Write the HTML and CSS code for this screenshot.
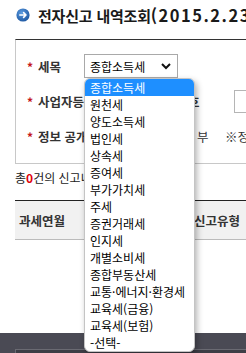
FILE: index.html
```html
<!DOCTYPE html>
<html lang="ko">
<head>
<meta charset="utf-8">
<link rel="stylesheet" href="styles.css">
</head>
<body>
<div class="page">
  <h1 class="title">
    <svg class="ico" width="14" height="14" viewBox="0 0 14 14"><defs><radialGradient id="g" cx="40%" cy="35%" r="70%"><stop offset="0" stop-color="#5b9be0"/><stop offset="1" stop-color="#1c56a0"/></radialGradient></defs><circle cx="7" cy="7" r="6.6" fill="url(#g)"/><path d="M3.8 7H10M7.6 4.6L10 7L7.6 9.4" fill="none" stroke="#fff" stroke-width="1.6" stroke-linecap="round" stroke-linejoin="round"/></svg>
    <span>전자신고 내역조회<span class="date">(2015.2.23 이후)</span></span>
  </h1>
  <div class="search">
    <div class="row">
      <span class="star">*</span><span class="lbl lbl-short">세목</span>
      <div class="select-wrap">
        <div class="select"><span>종합소득세</span><svg width="10" height="7" viewBox="0 0 10 7"><path d="M1 1L5 5L9 1" fill="none" stroke="#111" stroke-width="2"/></svg></div>
        <ul class="menu">
          <li class="on">종합소득세</li>
          <li>원천세</li>
          <li>양도소득세</li>
          <li>법인세</li>
          <li>상속세</li>
          <li>증여세</li>
          <li>부가가치세</li>
          <li>주세</li>
          <li>증권거래세</li>
          <li>인지세</li>
          <li>개별소비세</li>
          <li>종합부동산세</li>
          <li>교통·에너지·환경세</li>
          <li>교육세(금융)</li>
          <li>교육세(보험)</li>
          <li>-선택-</li>
        </ul>
      </div>
    </div>
    <div class="row">
      <span class="star">*</span><span class="lbl lbl-long">사업자등록번호 / 주민등록번호</span>
      <span class="input"></span>
    </div>
    <div class="row">
      <span class="star">*</span><span class="lbl lbl-info">정보 공개여부</span>
      <span class="opt opt-yes">○ 여</span><span class="opt opt-no">부</span><span class="note">※정보공개 동의</span>
    </div>
  </div>
  <p class="count">총<b>0</b>건의 신고내역이 있습니다.</p>
  <div class="grid-head">
    <span class="th th1">과세연월</span>
    <span class="th th2">신고서종류</span>
    <span class="th th3">신고구분신고유형</span>
  </div>
</div>
<div class="footer"><div class="footer-box"></div></div>
</body>
</html>
```
FILE: styles.css
```css
* { box-sizing: border-box; margin: 0; padding: 0; }
html, body { width: 246px; height: 353px; overflow: hidden; }
body {
  font-family: "Noto Sans CJK KR", "Noto Sans", sans-serif;
  color: #333;
  background: #fff;
}
.page { padding-left: 15px; width: 246px; height: 333px; white-space: nowrap; }
.title {
  display: flex;
  align-items: center;
  gap: 8px;
  height: 30px;
  padding-left: 1px;
  font-size: 15px;
  font-weight: bold;
  color: #1a1a1a;
  letter-spacing: -0.2px;
}
.title .date { font-size: 16.5px; letter-spacing: 1.5px; }
.ico { flex: none; }
.search {
  margin-top: 9px;
  width: 420px;
  border-top: 1px solid #333;
  border-left: 1px solid #c8c8c8;
  border-bottom: 1px solid #c8c8c8;
  padding: 14px 0 15px 11px;
}
.row { display: flex; align-items: center; height: 24px; }
.row + .row { margin-top: 11px; }
.star { width: 11px; color: #c4161c; font-size: 12px; font-weight: bold; }
.lbl { font-size: 12.5px; font-weight: bold; color: #333; }
.lbl-short { width: 46px; }
.lbl-long { width: 196px; overflow: hidden; }
.lbl-info { width: 122px; }
.select-wrap { position: relative; }
.select {
  width: 94px;
  height: 24px;
  border: 1px solid #a9a9a9;
  background: #fff;
  display: flex;
  align-items: center;
  justify-content: space-between;
  padding: 0 6px 0 5px;
  font-size: 12px;
  color: #000;
}
.menu {
  position: absolute;
  top: 24px;
  left: 0;
  width: 111px;
  list-style: none;
  background: #fff;
  border: 1px solid #c4c4c4;
  border-radius: 6px;
  overflow: hidden;
  box-shadow: 2px 3px 6px rgba(0, 0, 0, 0.3);
  z-index: 5;
}
.menu li {
  height: 17px;
  line-height: 17px;
  padding-left: 5px;
  font-size: 12px;
  color: #000;
}
.menu li.on { background: #1e8fff; color: #fff; }
.input { width: 120px; height: 23px; border: 1px solid #b5b5b5; background: #fff; }
.opt { font-size: 12.5px; color: #333; }
.opt-yes { width: 37px; }
.opt-no { width: 28px; }
.note { font-size: 12.5px; color: #333; }
.count { margin-top: 6px; font-size: 12px; line-height: 16px; color: #222; }
.count b { color: #e0000b; }
.grid-head {
  margin-top: 14px;
  width: 420px;
  height: 40px;
  display: flex;
  align-items: center;
  border-top: 1px solid #222;
  border-bottom: 1px solid #bbb;
  background: #f1f1f1;
  font-size: 12.5px;
  font-weight: bold;
  color: #333;
}
.th1 { width: 70px; padding-left: 4px; }
.th2 { width: 63px; }
.th3 { width: 200px; }
.footer { height: 20px; background: #4a4a54; padding: 16px 0 0 15px; }
.footer-box { height: 4px; border-top: 1px solid #6a6a72; border-left: 1px solid #6a6a72; background: #3e3e46; }
```
